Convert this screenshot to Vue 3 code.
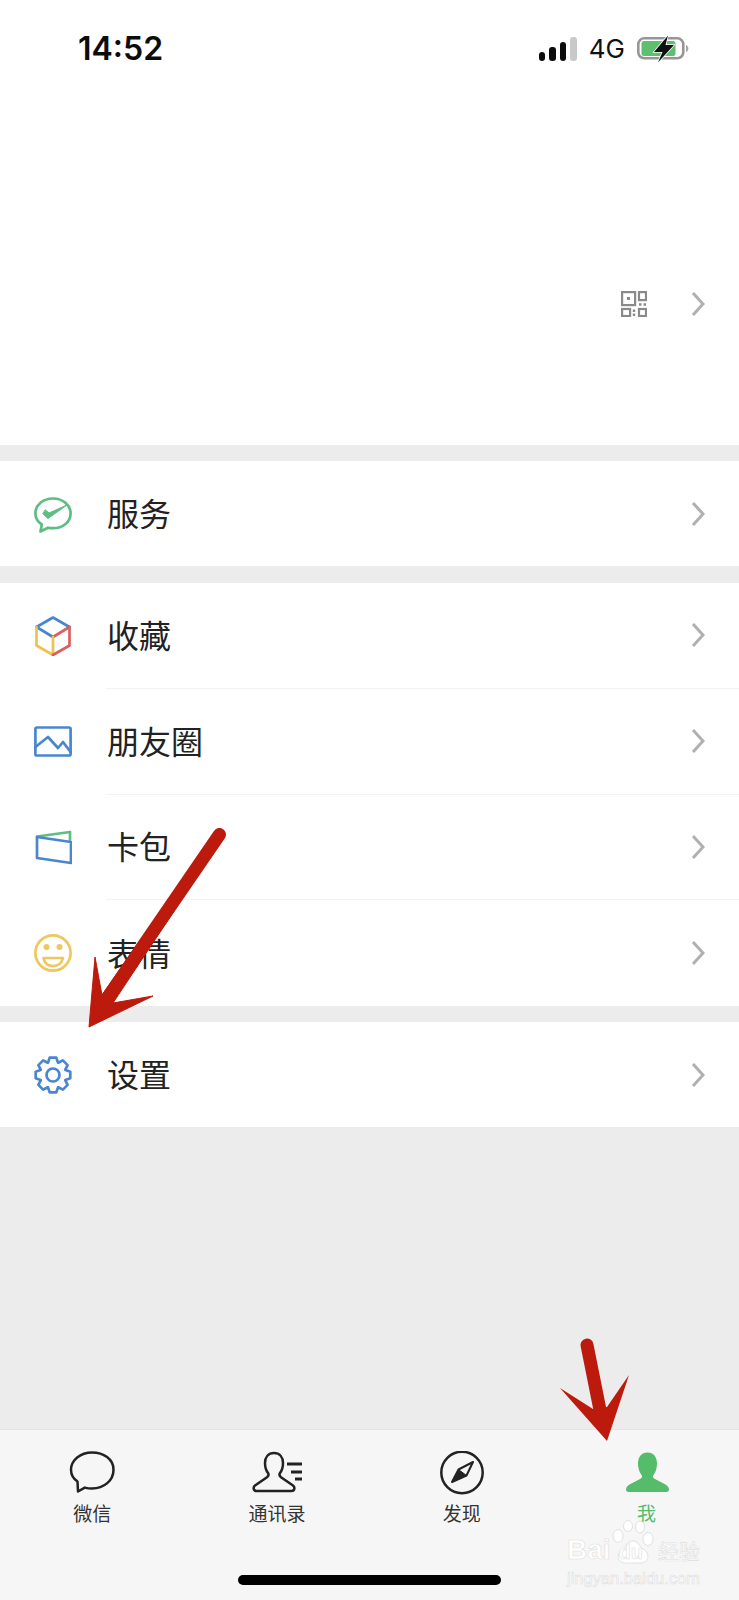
<script setup>
const groups = [
  [{ icon: 'service', label: '服务' }],
  [
    { icon: 'favorites', label: '收藏' },
    { icon: 'moments', label: '朋友圈' },
    { icon: 'cards', label: '卡包' },
    { icon: 'stickers', label: '表情' }
  ],
  [{ icon: 'settings', label: '设置' }]
]

const tabs = [
  { icon: 'chats', label: '微信' },
  { icon: 'contacts', label: '通讯录' },
  { icon: 'discover', label: '发现' },
  { icon: 'me', label: '我', active: true }
]

// eight rounded teeth round the centre of a 38x40 box
const gearPath = () => {
  const pts = []
  for (let i = 0; i < 8; i++) {
    const a = (i * Math.PI) / 4 - Math.PI / 2
    const spots = [
      [-0.38, 13.4],
      [-0.19, 17.6],
      [0.19, 17.6],
      [0.38, 13.4]
    ]
    for (const [d, r] of spots) {
      pts.push((19 + r * Math.cos(a + d)).toFixed(1) + ' ' + (20 + r * Math.sin(a + d)).toFixed(1))
    }
  }
  return 'M' + pts.join('L') + 'Z'
}
</script>

<template>
  <div class="page">
    <header class="profile">
      <div class="status">
        <span class="time">14:52</span>
        <div class="status-right">
          <div class="signal">
            <i class="bar b1"></i>
            <i class="bar b2"></i>
            <i class="bar b3"></i>
            <i class="bar b4"></i>
          </div>
          <span class="net">4G</span>
          <svg class="battery" width="54" height="28" viewBox="0 0 54 28">
            <rect x="3.300" y="3.300" width="45" height="20" rx="6" fill="none" stroke="#969696" stroke-width="2.600" />
            <rect x="6.500" y="6" width="34" height="15" rx="2.500" fill="#5cc06e" />
            <path d="M51 10v7c1.600-.6 2.400-2 2.400-3.500S52.600 10.600 51 10z" fill="#a5a5a5" />
            <path d="M33 .5 19 17H27.500L23 27.500 39 10H30.500Z" fill="#111" stroke="#fff" stroke-width="1.500" paint-order="stroke" />
          </svg>
        </div>
      </div>
      <div class="profile-actions">
        <svg class="qr" width="26" height="26" viewBox="0 0 26 26" fill="none" stroke="#8a8a8a" stroke-width="2.200">
          <rect x="1.100" y="1.100" width="13" height="13" />
          <rect x="6" y="6" width="3" height="3" fill="#8a8a8a" stroke="none" />
          <rect x="18" y="1.100" width="7" height="8" />
          <rect x="1.100" y="18" width="8" height="7" />
          <rect x="18" y="18" width="7" height="7" />
          <path d="M18 13.500h2.500M22.500 13.500h2.500M13 18.500v2.500M13 22.500v2.500" stroke-width="2.400" />
        </svg>
        <svg class="chevron" width="14" height="26" viewBox="0 0 14 26">
          <path d="M2 2 12 13 2 24" fill="none" stroke="#b0b0b0" stroke-width="3" />
        </svg>
      </div>
    </header>

    <main class="content">
      <section v-for="(group, g) in groups" :key="g" class="group">
        <div v-for="item in group" :key="item.label" class="row">
          <svg class="row-icon" width="38" height="40" viewBox="0 0 38 40" fill="none" stroke-width="2.700" stroke-linejoin="round" stroke-linecap="round">
            <g v-if="item.icon === 'service'" stroke="#5dbd83">
              <path d="M19 4.500C9 4.500 1.400 11 1.400 19.500c0 4.800 2.600 8.600 6.400 11L6.500 37.500l7.500-3.800c1.600.4 3.300.5 5 .5 10 0 17.600-6.400 17.600-14.700S29 4.500 19 4.500Z" />
              <path d="M9 20l5 4.500L33 11 15 19l-3.500-3Z" fill="#5dbd83" stroke-width="1" />
            </g>
            <g v-else-if="item.icon === 'favorites'">
              <path d="M2.500 11 19 21" stroke="#4a86d0" />
              <path d="M19 21 35.500 11" stroke="#d9605f" />
              <path d="M2.500 11 19 1.500 35.500 11" stroke="#4a86d0" />
              <path d="M2.500 11V29.500L19 39V21" stroke="#eec24f" />
              <path d="M35.500 11V29.500L19 39" stroke="#d9605f" />
            </g>
            <g v-else-if="item.icon === 'moments'" stroke="#4a86d0">
              <rect x="1.400" y="5.500" width="35.200" height="28" rx="1.500" />
              <path d="M1.400 25 14 15 24 26 29 20 36.600 30" />
            </g>
            <g v-else-if="item.icon === 'cards'">
              <path d="M3 9.500 36 5V13" stroke="#5dbd83" />
              <path d="M3 10 37 15V36L3 31Z" stroke="#4a86d0" />
            </g>
            <g v-else-if="item.icon === 'stickers'" stroke="#efc75e">
              <circle cx="19" cy="20" r="17.600" />
              <circle cx="12.500" cy="14" r="3" fill="#efc75e" stroke="none" />
              <circle cx="25.500" cy="14" r="3" fill="#efc75e" stroke="none" />
              <path d="M9.500 25H29C28 30 24 33 19 33S10.500 30 9.500 25Z" />
            </g>
            <g v-else stroke="#4a86d0">
              <path :d="gearPath()" />
              <circle cx="19" cy="20" r="6.500" />
            </g>
          </svg>
          <div class="row-body">
            <span class="row-label">{{ item.label }}</span>
            <svg class="chevron" width="14" height="26" viewBox="0 0 14 26">
              <path d="M2 2 12 13 2 24" fill="none" stroke="#b0b0b0" stroke-width="3" />
            </svg>
          </div>
        </div>
      </section>
    </main>

    <nav class="tabbar">
      <div class="tabs">
        <div v-for="tab in tabs" :key="tab.label" class="tab" :class="{ active: tab.active }">
          <svg width="52" height="44" viewBox="0 0 52 44" fill="none" stroke="#222" stroke-width="2.500" stroke-linejoin="round">
            <path v-if="tab.icon === 'chats'" d="M26 1.500C14.500 1.500 5 9 5 18.700c0 5 2.400 9 6.500 11.800L12 40.500l6.800-3.900c2.300.6 4.700.9 7.200.9 12 0 21.500-8 21.500-18.800S37.500 1.500 26 1.500Z" />
            <g v-else-if="tab.icon === 'contacts'">
              <path d="M23 2c-5.500 0-9 4-9 10 0 4 1 7.500 3 10 1 1.500.5 3-1 4.200L4 34.500c-2 1.500-2 5.500 1.500 5.500h35c3.500 0 3.500-4 1.500-5.500L30 26.200c-1.500-1.200-2-2.700-1-4.200 2-2.500 3-6 3-10 0-6-3.500-10-9-10Z" />
              <path d="M36 13H51M40 21H51M44 28H51" stroke-width="2.800" />
            </g>
            <g v-else-if="tab.icon === 'discover'">
              <circle cx="26" cy="21.500" r="20.700" />
              <path d="M37 11 22.500 18.500 16 31 30.500 24.500Z" stroke-width="2" />
              <path d="M22.500 18.500 16 31 30.500 24.500Z" fill="#222" stroke-width="1" />
            </g>
            <path v-else d="M26.500 1.500c-6 0-9.500 4.500-9.500 11 0 5 1.500 9 3.500 11.500 1 1.500.5 3-1 3.800L8.500 33.500c-2 1-3.500 3-3.500 5 0 1.500 1 2.500 2.500 2.500h38c1.500 0 2.500-1 2.500-2.500 0-2-1.500-4-3.500-5L33.500 27.800c-1.500-.8-2-2.300-1-3.800 2-2.500 3.500-6.500 3.500-11.500 0-6.500-3.500-11-9.500-11Z" fill="#55bc6c" stroke="none" />
          </svg>
          <span class="tab-label">{{ tab.label }}</span>
        </div>
      </div>
      <div class="home-indicator"></div>
    </nav>

    <!-- annotation arrows laid over the screen -->
    <svg class="arrows" width="739" height="1600" viewBox="0 0 739 1600">
      <path d="M216 832 223 837 113 1003 153 996 89 1027 95 957 102 995Z" fill="#bb1a0c" stroke="#bb1a0c" stroke-width="1" stroke-linejoin="round" />
      <path d="M219.500 834.500 106 1000" stroke="#bb1a0c" stroke-width="13" stroke-linecap="round" />
      <path d="M587 1345 600 1410" stroke="#bb1a0c" stroke-width="13" stroke-linecap="round" />
      <path d="M560 1388 593 1409 607 1407 629 1375 607 1441Z" fill="#bb1a0c" />
    </svg>

    <div class="watermark">
      <svg class="wm-paw" width="42" height="46" viewBox="0 0 42 46" fill="#fff" stroke="#e0e0e0">
        <ellipse cx="6" cy="16" rx="5" ry="6.500" />
        <ellipse cx="16" cy="6" rx="4.500" ry="5.500" />
        <ellipse cx="28" cy="7" rx="4.500" ry="6" />
        <ellipse cx="36" cy="19" rx="5" ry="6.500" />
        <path d="M21 21c-5 0-6 5-10 8-5 3-6 8-4 11 3 4 9 3 14 3s11 1 14-3c2-3 1-8-4-11-4-3-5-8-10-8Z" />
      </svg>
      <div class="wm-brand">
        <span>Bai</span>
        <span class="wm-du">du</span>
        <span class="wm-cn">经验</span>
      </div>
      <div class="wm-url">jingyan.baidu.com</div>
    </div>
  </div>
</template>

<style>
body {
  margin: 0;
  background: #ececec;
}
</style>

<style scoped>
.page {
  position: relative;
  width: 739px;
  height: 1600px;
  overflow: hidden;
  display: flex;
  flex-direction: column;
  background: #ececec;
  font-family: "Noto Sans CJK SC", "Liberation Sans", sans-serif;
  color: #222;
}

.profile {
  height: 445px;
  background: #fff;
  box-sizing: border-box;
  padding-top: 31px;
}

.status {
  display: flex;
  justify-content: space-between;
  align-items: center;
  height: 36px;
  padding-left: 78px;
  padding-right: 50px;
}

.time {
  font-family: Inter, "Liberation Sans", sans-serif;
  font-size: 32px;
  font-weight: 600;
  color: #0c0c0c;
  line-height: 36px;
}

.status-right {
  display: flex;
  align-items: center;
}

.signal {
  display: flex;
  align-items: flex-end;
  gap: 4px;
  height: 24px;
  margin-right: 12px;
}

.bar {
  width: 6.500px;
  border-radius: 3px;
  background: #0c0c0c;
}

.b1 {
  height: 9px;
}

.b2 {
  height: 14px;
}

.b3 {
  height: 19px;
}

.b4 {
  height: 24px;
  background: #c9c9c9;
}

.net {
  font-family: Inter, "Liberation Sans", sans-serif;
  font-size: 26px;
  line-height: 28px;
  color: #111;
  margin-right: 10px;
}

.profile-actions {
  display: flex;
  justify-content: flex-end;
  align-items: center;
  gap: 44px;
  margin-top: 224px;
  padding-right: 34px;
}

.group {
  margin-top: 16px;
  background: #fff;
}

.group:nth-child(2) {
  margin-top: 17px;
}

.row {
  display: flex;
  align-items: center;
  height: 105px;
  padding-left: 34px;
}

.group:nth-child(2) .row {
  height: 105.750px;
}

.row-icon {
  flex-shrink: 0;
  margin-right: 34px;
}

.row-body {
  flex: 1;
  height: 100%;
  display: flex;
  justify-content: space-between;
  align-items: center;
  padding-right: 34px;
  box-sizing: border-box;
  border-bottom: 1px solid #f3f3f3;
}

.row:last-child .row-body {
  border-bottom: none;
}

.row-label {
  font-size: 32px;
  margin-top: -3px;
  padding-left: 1px;
  color: #222;
}

.chevron {
  display: block;
}

.content {
  flex: 1;
}

.tabbar {
  height: 171px;
  box-sizing: border-box;
  padding-top: 21px;
  background: #f6f6f6;
  border-top: 1px solid #e4e4e4;
}

.tabs {
  display: grid;
  grid-template-columns: repeat(4, 1fr);
}

.tab {
  display: flex;
  flex-direction: column;
  align-items: center;
}

.tab-label {
  margin-top: 4px;
  font-size: 19px;
  line-height: 28px;
  color: #333;
}

.tab.active .tab-label {
  color: #55bc6c;
}

.home-indicator {
  width: 263px;
  height: 10px;
  margin: 48px auto 0;
  border-radius: 5px;
  background: #000;
}

.arrows {
  position: absolute;
  top: 0;
  left: 0;
  pointer-events: none;
}

.watermark {
  position: absolute;
  left: 567px;
  top: 1520px;
  width: 134px;
  color: #fff;
  -webkit-text-stroke: 0.6px #dedede;
}

.wm-paw {
  position: absolute;
  left: 45px;
  top: 0;
}

.wm-brand {
  position: relative;
  display: flex;
  align-items: center;
  margin-top: 17px;
  height: 26px;
  font-family: "Liberation Sans", sans-serif;
  font-size: 28px;
  font-weight: 700;
  white-space: nowrap;
}

.wm-du {
  font-size: 20px;
  margin: 4px 0 0 8px;
}

.wm-cn {
  font-family: "Noto Sans CJK SC", sans-serif;
  font-size: 21px;
  font-weight: 400;
  margin-left: 15px;
}

.wm-url {
  position: relative;
  margin-top: 5px;
  font-family: "Liberation Sans", sans-serif;
  font-size: 16.500px;
  line-height: 20px;
  white-space: nowrap;
}
</style>
